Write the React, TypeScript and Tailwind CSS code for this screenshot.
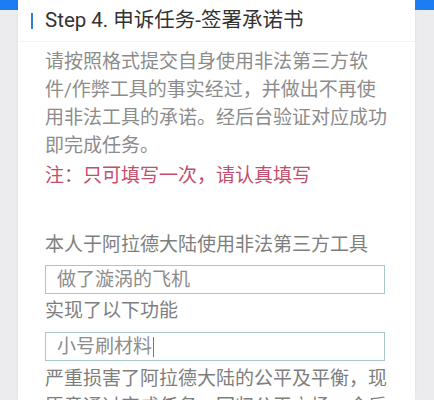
export default function App() {
  const font = { fontFamily: "Roboto, 'Noto Sans CJK SC', sans-serif" };
  return (
    <div
      className="w-[434px] h-[400px] overflow-hidden bg-[#ececee] flex"
      style={font}
    >
      <div className="w-[18px] shrink-0">
        <div className="h-[10px] bg-[#1d7cf2]" />
      </div>
      <div className="flex-1 bg-white shadow-[0_0_3px_rgba(0,0,0,0.06)] flex flex-col">
        <div className="h-[42px] shrink-0 flex items-center pl-[13px] border-b border-[#f3f3f3]">
          <div className="w-[2px] h-[16px] bg-[#2f7fd6] mr-[12px]" />
          <span className="text-[20.5px] leading-none text-[#333]">Step 4. 申诉任务-签署承诺书</span>
        </div>
        <div className="shrink-0 pl-[27px] pt-[6px] text-[19px] leading-[28px] text-[#8c8c8c] whitespace-nowrap">
          <div>请按照格式提交自身使用非法第三方软</div>
          <div>件/作弊工具的事实经过，并做出不再使</div>
          <div>用非法工具的承诺。经后台验证对应成功</div>
          <div>即完成任务。</div>
          <div className="mt-[2px] text-[#c24d6c]">注：只可填写一次，请认真填写</div>
          <div className="mt-[41px] text-[#7e7e7e]">本人于阿拉德大陆使用非法第三方工具</div>
          <div className="mt-[6px] w-[340px] h-[29px] border-[1.5px] border-[#a9c6cf] flex items-center pl-[11px] text-[#8c8c8c]">
            做了漩涡的飞机
          </div>
          <div className="mt-[3px] text-[#7e7e7e]">实现了以下功能</div>
          <div className="mt-[7px] w-[340px] h-[29px] border-[1.5px] border-[#a9c6cf] flex items-center pl-[11px] text-[#8c8c8c]">
            小号刷材料
            <span className="w-px h-[20px] bg-[#777] ml-[1px]" />
          </div>
          <div className="mt-[4px] text-[#7e7e7e]">严重损害了阿拉德大陆的公平及平衡，现</div>
          <div className="text-[#7e7e7e]">愿意通过完成任务，回归公平立场，今后</div>
        </div>
      </div>
      <div className="w-[19px] shrink-0">
        <div className="h-[10px] bg-[#1d7cf2]" />
      </div>
    </div>
  );
}
